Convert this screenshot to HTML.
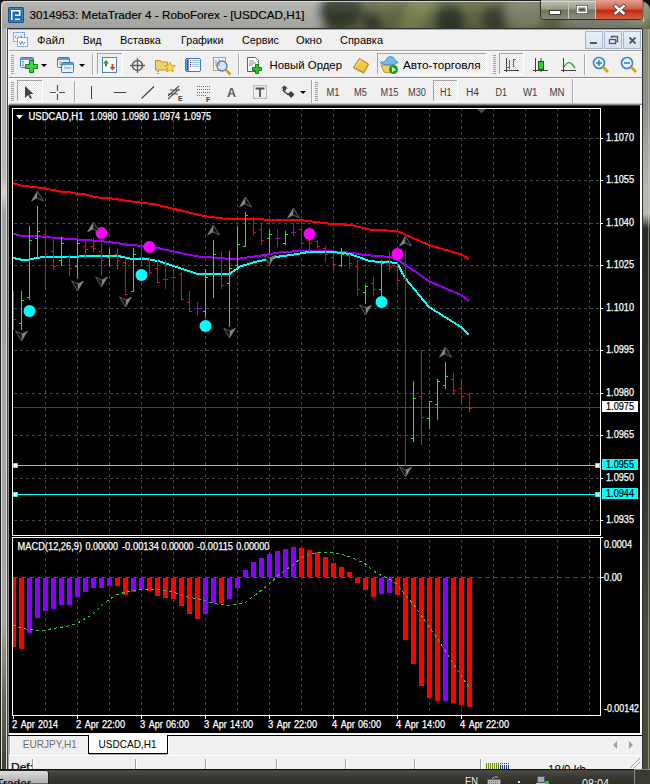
<!DOCTYPE html>
<html><head><meta charset="utf-8"><style>html,body{margin:0;padding:0;width:650px;height:784px;overflow:hidden;background:#000}</style></head>
<body><svg width="650" height="784" viewBox="0 0 650 784" font-family="'Liberation Sans', sans-serif" style="display:block">
<defs>
<linearGradient id="tb" x1="0" y1="0" x2="1" y2="0"><stop offset="0" stop-color="#b8b8b6"/><stop offset="0.3" stop-color="#b0b0ac"/><stop offset="0.46" stop-color="#a4a49c"/><stop offset="0.49" stop-color="#808070"/><stop offset="0.52" stop-color="#343a2c"/><stop offset="0.55" stop-color="#4c5238"/><stop offset="0.575" stop-color="#62683e"/><stop offset="0.6" stop-color="#40462e"/><stop offset="0.63" stop-color="#7a8050"/><stop offset="0.66" stop-color="#6a7040"/><stop offset="0.69" stop-color="#2e3424"/><stop offset="0.72" stop-color="#525a38"/><stop offset="0.75" stop-color="#3a4030"/><stop offset="0.78" stop-color="#6e7458"/><stop offset="0.83" stop-color="#8a8c78"/><stop offset="1" stop-color="#7a7c68"/></linearGradient>
<linearGradient id="tbv" x1="0" y1="0" x2="0" y2="1"><stop offset="0" stop-color="#fff" stop-opacity="0.18"/><stop offset="0.5" stop-color="#fff" stop-opacity="0.04"/><stop offset="1" stop-color="#000" stop-opacity="0.05"/></linearGradient>
<linearGradient id="lf" x1="0" y1="0" x2="0" y2="1"><stop offset="0" stop-color="#b4b4b2"/><stop offset="0.2" stop-color="#b8b8b6"/><stop offset="0.22" stop-color="#d4d4d2"/><stop offset="0.25" stop-color="#a0a0a0"/><stop offset="0.8" stop-color="#a8a8a8"/><stop offset="0.9" stop-color="#6a6a58"/><stop offset="1" stop-color="#3e4030"/></linearGradient>
<linearGradient id="rf" x1="0" y1="0" x2="0" y2="1"><stop offset="0" stop-color="#8a8c72"/><stop offset="0.1" stop-color="#8e8e86"/><stop offset="0.2" stop-color="#b4b4ac"/><stop offset="0.25" stop-color="#b8b8b0"/><stop offset="0.27" stop-color="#2a2c20"/><stop offset="0.6" stop-color="#34362a"/><stop offset="0.8" stop-color="#4a4a3a"/><stop offset="1" stop-color="#4a4a3a"/></linearGradient>
<linearGradient id="cls" x1="0" y1="0" x2="0" y2="1"><stop offset="0" stop-color="#e8a090"/><stop offset="0.45" stop-color="#d0604a"/><stop offset="0.55" stop-color="#c02a10"/><stop offset="1" stop-color="#d86040"/></linearGradient>
<linearGradient id="btn" x1="0" y1="0" x2="0" y2="1"><stop offset="0" stop-color="#e0e2d8" stop-opacity="0.75"/><stop offset="0.45" stop-color="#b0b2a0" stop-opacity="0.65"/><stop offset="0.55" stop-color="#70745e" stop-opacity="0.6"/><stop offset="1" stop-color="#9a9c88" stop-opacity="0.6"/></linearGradient>
<linearGradient id="task" x1="0" y1="0" x2="0" y2="1"><stop offset="0" stop-color="#1a1a1a"/><stop offset="0.12" stop-color="#4c4c48"/><stop offset="0.45" stop-color="#3c3c36"/><stop offset="1" stop-color="#2e2e26"/></linearGradient>
<linearGradient id="mdi" x1="0" y1="0" x2="0" y2="1"><stop offset="0" stop-color="#e8eff8"/><stop offset="1" stop-color="#d6e2f2"/></linearGradient>
<linearGradient id="tbtn" x1="0" y1="0" x2="0" y2="1"><stop offset="0" stop-color="#e0e0e0"/><stop offset="1" stop-color="#a8a8a8"/></linearGradient>
</defs>
<rect x="0" y="0" width="650" height="784" fill="#a8a8a4" />
<defs><filter id="bl" x="-10%" y="-50%" width="120%" height="200%"><feGaussianBlur stdDeviation="4"/></filter><clipPath id="tclip"><rect x="0" y="0" width="650" height="29"/></clipPath><clipPath id="rclip"><rect x="642" y="0" width="8" height="769"/></clipPath></defs>
<g clip-path="url(#tclip)"><rect x="0" y="0" width="650" height="29" fill="#586040"/><g filter="url(#bl)">
<rect x="-20" y="-10" width="342" height="50" fill="#a8a8a4"/>
<ellipse cx="340" cy="10" rx="22" ry="18" fill="#2c3224"/>
<polygon points="352,40 368,40 404,-10 388,-10" fill="#626840"/>
<ellipse cx="372" cy="22" rx="10" ry="10" fill="#30362a"/>
<polygon points="392,40 418,40 440,-10 414,-10" fill="#727a48"/>
<ellipse cx="450" cy="20" rx="14" ry="16" fill="#2a3024"/>
<ellipse cx="478" cy="5" rx="14" ry="10" fill="#5a6238"/>
<ellipse cx="495" cy="18" rx="14" ry="14" fill="#353b2c"/>
<ellipse cx="525" cy="14" rx="20" ry="18" fill="#747a60"/>
<ellipse cx="600" cy="22" rx="40" ry="12" fill="#7a7c70"/>
<ellipse cx="640" cy="10" rx="14" ry="20" fill="#8a8c70"/>
</g></g>
<rect x="0" y="0" width="650" height="29" fill="url(#tbv)" />
<rect x="0" y="29" width="8" height="740" fill="url(#lf)" />
<rect x="642" y="29" width="8" height="740" fill="url(#rf)" />
<rect x="0" y="0" width="650" height="1" fill="#202020" />
<path d="M0 0 H6 Q1 1 0 6Z" fill="#101010"/><path d="M1.5 8 Q1.5 1.5 7 1.5 H640" fill="none" stroke="#e8e8e8" stroke-width="1" opacity="0.8"/>
<rect x="0" y="0" width="1" height="784" fill="#1a1a1a" />
<rect x="1" y="6" width="1" height="763" fill="#e0e0e0" />
<rect x="6" y="28" width="1" height="741" fill="#d8d8d6" />
<rect x="7" y="28" width="1" height="741" fill="#454545" />
<rect x="8" y="28" width="634" height="1" fill="#e4e4e0" />
<rect x="8" y="29" width="1" height="76" fill="#fafafa" />
<rect x="7" y="28" width="635" height="1" fill="#303030" />
<rect x="642" y="29" width="1" height="740" fill="#303030" />
<rect x="648" y="29" width="1" height="740" fill="#d0d0c0" opacity="0.5"/>
<path d="M638 0 L650 0 L650 9 Q649 1.5 638 0Z" fill="#101010"/><path d="M643.5 22 V7 Q643.5 1.5 638 1.5" fill="none" stroke="#e0e0d8" stroke-width="1" opacity="0.7"/>
<rect x="8" y="7" width="16" height="16" rx="1.5" fill="#1a5288"/><rect x="9" y="8" width="14" height="14" rx="1" fill="#3a86c0"/><rect x="10" y="9" width="12" height="12" fill="#226aa6"/>
<path d="M11 10 h9.5 v6 h-5.5 v-1.6 h3.9 v-2.8 h-6.3 v8.4 h-1.6z" fill="#fff"/><rect x="15" y="18.5" width="5" height="1.6" fill="#e8f0f8"/>
<text x="29.5" y="18.5" font-size="11.5" fill="#000" text-anchor="start" font-weight="normal" textLength="275" lengthAdjust="spacingAndGlyphs" stroke="#000" stroke-width="0.15">3014953: MetaTrader 4 - RoboForex - [USDCAD,H1]</text>
<path d="M540.5 0 V16 Q540.5 19.5 544 19.5 H639.5 Q643 19.5 643 16 V0" fill="none" stroke="#303428" stroke-width="1"/>
<path d="M541 0 H568 V19 H544 Q541 19 541 16Z" fill="url(#btn)"/>
<path d="M569 0 H595 V19 H569Z" fill="url(#btn)"/>
<path d="M596 0 H642.5 V16 Q642.5 19 639.5 19 H596Z" fill="url(#cls)"/>
<rect x="568" y="0" width="1" height="19" fill="#e8e8e0" opacity="0.7"/>
<rect x="595" y="0" width="1" height="19" fill="#e8e8e0" opacity="0.7"/>
<rect x="549.5" y="10.5" width="11" height="4" fill="#fff" stroke="#404040" stroke-width="1"/>
<rect x="576.5" y="5.5" width="11" height="8" fill="none" stroke="#404040" stroke-width="1"/><rect x="577.5" y="6.5" width="9" height="6" fill="none" stroke="#fff" stroke-width="1.6"/><rect x="579.5" y="8.5" width="5" height="2" fill="#505050"/>
<path d="M614 5 L625 14.5 M625 5 L614 14.5" stroke="#404040" stroke-width="4"/><path d="M614.5 5.5 L624.5 14 M624.5 5.5 L614.5 14" stroke="#fff" stroke-width="2.4"/>
<rect x="9" y="30" width="633" height="739" fill="#f0f0f0" />
<rect x="13.5" y="32.5" width="11" height="9" fill="#f4f8ff" stroke="#3a7ae0" stroke-dasharray="1.2 0.8"/><path d="M15 37 l1.5 -2 M15 37 l1.5 2 M18 37 h4 l-1.5 -1.5 M22 37 l-1.5 1.5" stroke="#3a6ad0" stroke-width="0.7" fill="none"/>
<rect x="17.5" y="37.5" width="10" height="9" fill="#fff" stroke="#3a7ae0" stroke-dasharray="1.2 0.8"/><path d="M19 42 l1.5 2.5 l1.5 -3 l1.5 3 l1.5 -2.5" stroke="#3a6ad0" fill="none" stroke-width="0.8"/>
<text x="37" y="43.7" font-size="11" fill="#000" text-anchor="start" font-weight="normal" textLength="27.5" lengthAdjust="spacingAndGlyphs" >Файл</text>
<text x="83" y="43.7" font-size="11" fill="#000" text-anchor="start" font-weight="normal" textLength="18.5" lengthAdjust="spacingAndGlyphs" >Вид</text>
<text x="120" y="43.7" font-size="11" fill="#000" text-anchor="start" font-weight="normal" textLength="41" lengthAdjust="spacingAndGlyphs" >Вставка</text>
<text x="181" y="43.7" font-size="11" fill="#000" text-anchor="start" font-weight="normal" textLength="42.5" lengthAdjust="spacingAndGlyphs" >Графики</text>
<text x="242" y="43.7" font-size="11" fill="#000" text-anchor="start" font-weight="normal" textLength="37" lengthAdjust="spacingAndGlyphs" >Сервис</text>
<text x="296" y="43.7" font-size="11" fill="#000" text-anchor="start" font-weight="normal" textLength="26" lengthAdjust="spacingAndGlyphs" >Окно</text>
<text x="340" y="43.7" font-size="11" fill="#000" text-anchor="start" font-weight="normal" textLength="43" lengthAdjust="spacingAndGlyphs" >Справка</text>
<rect x="585.5" y="31.5" width="17" height="17" fill="url(#mdi)" stroke="#a4b4c8"/>
<rect x="604.5" y="31.5" width="17" height="17" fill="url(#mdi)" stroke="#a4b4c8"/>
<rect x="623.5" y="31.5" width="17" height="17" fill="url(#mdi)" stroke="#a4b4c8"/>
<rect x="590" y="42" width="7" height="2" fill="#505a64"/>
<rect x="609.5" y="39.5" width="6" height="4" fill="none" stroke="#505a64" stroke-width="1.3"/><path d="M611.5 38 V36.5 H617.5 V41.5 H616" fill="none" stroke="#505a64" stroke-width="1.3"/>
<path d="M629.5 37.5 L635.5 43.5 M635.5 37.5 L629.5 43.5" stroke="#505a64" stroke-width="1.8"/>
<rect x="9" y="50" width="633" height="1" fill="#a0a0a0" />
<rect x="9" y="51" width="633" height="1" fill="#ffffff" />
<rect x="9" y="52" width="633" height="25" fill="#f0f0f0" />
<rect x="9" y="77" width="633" height="1" fill="#8c8c8c" />
<rect x="9" y="78" width="633" height="1" fill="#ffffff" />
<rect x="9" y="79" width="633" height="24" fill="#f0f0f0" />
<rect x="11" y="55" width="3" height="1" fill="#a0a0a0" />
<rect x="11" y="57" width="3" height="1" fill="#a0a0a0" />
<rect x="11" y="59" width="3" height="1" fill="#a0a0a0" />
<rect x="11" y="61" width="3" height="1" fill="#a0a0a0" />
<rect x="11" y="63" width="3" height="1" fill="#a0a0a0" />
<rect x="11" y="65" width="3" height="1" fill="#a0a0a0" />
<rect x="11" y="67" width="3" height="1" fill="#a0a0a0" />
<rect x="11" y="69" width="3" height="1" fill="#a0a0a0" />
<rect x="11" y="71" width="3" height="1" fill="#a0a0a0" />
<rect x="11" y="73" width="3" height="1" fill="#a0a0a0" />
<rect x="11" y="82" width="3" height="1" fill="#a0a0a0" />
<rect x="11" y="84" width="3" height="1" fill="#a0a0a0" />
<rect x="11" y="86" width="3" height="1" fill="#a0a0a0" />
<rect x="11" y="88" width="3" height="1" fill="#a0a0a0" />
<rect x="11" y="90" width="3" height="1" fill="#a0a0a0" />
<rect x="11" y="92" width="3" height="1" fill="#a0a0a0" />
<rect x="11" y="94" width="3" height="1" fill="#a0a0a0" />
<rect x="11" y="96" width="3" height="1" fill="#a0a0a0" />
<rect x="11" y="98" width="3" height="1" fill="#a0a0a0" />
<rect x="11" y="100" width="3" height="1" fill="#a0a0a0" />
<rect x="493" y="55" width="3" height="1" fill="#a0a0a0" />
<rect x="493" y="57" width="3" height="1" fill="#a0a0a0" />
<rect x="493" y="59" width="3" height="1" fill="#a0a0a0" />
<rect x="493" y="61" width="3" height="1" fill="#a0a0a0" />
<rect x="493" y="63" width="3" height="1" fill="#a0a0a0" />
<rect x="493" y="65" width="3" height="1" fill="#a0a0a0" />
<rect x="493" y="67" width="3" height="1" fill="#a0a0a0" />
<rect x="493" y="69" width="3" height="1" fill="#a0a0a0" />
<rect x="493" y="71" width="3" height="1" fill="#a0a0a0" />
<rect x="493" y="73" width="3" height="1" fill="#a0a0a0" />
<rect x="315" y="82" width="3" height="1" fill="#a0a0a0" />
<rect x="315" y="84" width="3" height="1" fill="#a0a0a0" />
<rect x="315" y="86" width="3" height="1" fill="#a0a0a0" />
<rect x="315" y="88" width="3" height="1" fill="#a0a0a0" />
<rect x="315" y="90" width="3" height="1" fill="#a0a0a0" />
<rect x="315" y="92" width="3" height="1" fill="#a0a0a0" />
<rect x="315" y="94" width="3" height="1" fill="#a0a0a0" />
<rect x="315" y="96" width="3" height="1" fill="#a0a0a0" />
<rect x="315" y="98" width="3" height="1" fill="#a0a0a0" />
<rect x="315" y="100" width="3" height="1" fill="#a0a0a0" />
<rect x="92" y="54" width="1" height="21" fill="#a8a8a8" />
<rect x="93" y="54" width="1" height="21" fill="#ffffff" />
<rect x="238" y="54" width="1" height="21" fill="#a8a8a8" />
<rect x="239" y="54" width="1" height="21" fill="#ffffff" />
<rect x="584" y="54" width="1" height="21" fill="#a8a8a8" />
<rect x="585" y="54" width="1" height="21" fill="#ffffff" />
<rect x="74" y="81" width="1" height="21" fill="#a8a8a8" />
<rect x="75" y="81" width="1" height="21" fill="#ffffff" />
<rect x="311" y="80" width="1" height="23" fill="#a8a8a8" />
<rect x="312" y="80" width="1" height="23" fill="#ffffff" />
<rect x="572" y="79" width="1" height="25" fill="#a8a8a8" />
<rect x="573" y="79" width="1" height="25" fill="#ffffff" />
<defs><pattern id="chk" x="0" y="0" width="2" height="2" patternUnits="userSpaceOnUse"><rect width="2" height="2" fill="#fbfbfb"/><rect width="1" height="1" fill="#e6e6e6"/><rect x="1" y="1" width="1" height="1" fill="#e6e6e6"/></pattern></defs>
<rect x="97" y="53" width="26" height="22" fill="url(#chk)"/>
<rect x="97" y="53" width="26" height="1" fill="#a4a4a4" />
<rect x="97" y="53" width="1" height="22" fill="#a4a4a4" />
<rect x="97" y="74" width="26" height="1" fill="#ffffff" />
<rect x="122" y="53" width="1" height="22" fill="#ffffff" />
<rect x="499" y="53" width="25" height="22" fill="url(#chk)"/>
<rect x="499" y="53" width="25" height="1" fill="#a4a4a4" />
<rect x="499" y="53" width="1" height="22" fill="#a4a4a4" />
<rect x="499" y="74" width="25" height="1" fill="#ffffff" />
<rect x="523" y="53" width="1" height="22" fill="#ffffff" />
<rect x="17" y="80" width="26" height="22" fill="url(#chk)"/>
<rect x="17" y="80" width="26" height="1" fill="#a4a4a4" />
<rect x="17" y="80" width="1" height="22" fill="#a4a4a4" />
<rect x="17" y="101" width="26" height="1" fill="#ffffff" />
<rect x="42" y="80" width="1" height="22" fill="#ffffff" />
<rect x="433" y="80" width="25" height="22" fill="url(#chk)"/>
<rect x="433" y="80" width="25" height="1" fill="#a4a4a4" />
<rect x="433" y="80" width="1" height="22" fill="#a4a4a4" />
<rect x="433" y="101" width="25" height="1" fill="#ffffff" />
<rect x="457" y="80" width="1" height="22" fill="#ffffff" />
<rect x="377" y="53" width="110" height="22" fill="url(#chk)"/>
<rect x="377" y="53" width="110" height="1" fill="#a4a4a4" />
<rect x="377" y="53" width="1" height="22" fill="#a4a4a4" />
<rect x="377" y="74" width="110" height="1" fill="#ffffff" />
<rect x="486" y="53" width="1" height="22" fill="#ffffff" />
<rect x="20.5" y="57.5" width="13" height="10" rx="1" fill="#e8f0fa" stroke="#3a7ac8"/><rect x="21" y="58" width="12" height="2" fill="#5a9ae0"/>
<path d="M23 61 v5 M22 62 l1 -1 l1 1 M22 65 l1 1 l1 -1" stroke="#7090b0" stroke-width="0.8" fill="none"/>
<path d="M29.5 60.5 h4 v4 h4 v4 h-4 v4 h-4 v-4 h-4 v-4 h4z" fill="#40d040" stroke="#108010"/>
<path d="M41 64 h6 l-3 3z" fill="#000"/>
<rect x="57.5" y="57.5" width="12" height="10" rx="1" fill="#e8f0fa" stroke="#3a7ac8"/><rect x="61.5" y="62.5" width="12" height="10" rx="1" fill="#e8f0fa" stroke="#3a7ac8"/><rect x="62" y="63" width="11" height="2" fill="#5a9ae0"/><rect x="58" y="58" width="11" height="2" fill="#5a9ae0"/>
<path d="M60 61 v4 M64 68 h7 M60 65 h5" stroke="#7090b0" stroke-width="0.8" fill="none"/>
<path d="M79 64 h6 l-3 3z" fill="#000"/>
<rect x="102.5" y="57.5" width="14" height="15" fill="#fff" stroke="#4a86c8"/>
<path d="M106 60 l-3 3.5 h2 v3 h2 v-3 h2z" fill="#20a020"/><path d="M112.5 70.5 l3 -3.5 h-2 v-3 h-2 v3 h-2z" fill="#e04020"/>
<circle cx="137.5" cy="65.5" r="5" fill="none" stroke="#606060" stroke-width="1.6"/><path d="M137.5 58 v15 M130 65.5 h15" stroke="#606060" stroke-width="1.4"/>
<path d="M155.5 60.5 h5 l1 1.5 h6 v8 h-12z" fill="#f0d070" stroke="#c09030"/><path d="M170 62 l1.6 3.4 3.7 .4 -2.8 2.5 .8 3.7 -3.3 -1.9 -3.3 1.9 .8 -3.7 -2.8 -2.5 3.7 -.4z" fill="#f8d840" stroke="#c89a20" stroke-width="0.8"/>
<path d="M158 71 v3" stroke="#404040" stroke-dasharray="1 1"/>
<rect x="185.5" y="58.5" width="15" height="13" rx="1.5" fill="#fff" stroke="#3a7ac8" stroke-width="1"/><rect x="186" y="59" width="3" height="12" fill="#5a9ae0"/><rect x="187" y="60" width="1" height="10" fill="#2a5a90"/><path d="M191.5 60.5 h8 M191.5 62.5 h8 M191.5 64.5 h8 M191.5 66.5 h8" stroke="#a8c4ec" stroke-width="1"/><rect x="190" y="60" width="1" height="1" fill="#e02020"/><rect x="190" y="62" width="1" height="1" fill="#202020"/><rect x="190" y="64" width="1" height="1" fill="#202020"/><rect x="190" y="66" width="1" height="1" fill="#e02020"/>
<rect x="213.5" y="57.5" width="12" height="13" fill="#f4f4f4" stroke="#b0a080"/><circle cx="222" cy="66" r="5" fill="#cfe4f8" stroke="#5080b0" stroke-width="1.3"/><path d="M225.5 69.5 l5 5" stroke="#d0a020" stroke-width="2.5"/><path d="M216 60 v6 M219 59 v7" stroke="#708090" stroke-width="0.8"/>
<path d="M247.5 57.5 h8 l3 3 v11 h-11z" fill="#fff" stroke="#606060"/><path d="M249 61 h5 M249 63 h7 M249 65 h4" stroke="#909090"/>
<path d="M255.5 64.5 h3 v3 h3 v3 h-3 v3 h-3 v-3 h-3 v-3 h3z" fill="#30c030" stroke="#108010"/>
<text x="269.5" y="69" font-size="11" fill="#000" text-anchor="start" font-weight="normal" textLength="72.5" lengthAdjust="spacingAndGlyphs" >Новый Ордер</text>
<path d="M353.5 67.5 L359.5 58.5 L368.5 64 L363.5 72.5 Z" fill="#f0c848" stroke="#a87820"/><path d="M354 68 L363.5 73 L368.5 64.5" fill="none" stroke="#c89030" stroke-width="1.2"/><path d="M356 66 L361 59.5" stroke="#fff0a0" stroke-width="1"/>
<path d="M381 65 l14 0 l-3 7 q-4 2 -8 0z" fill="#f0d060" stroke="#b09030"/><path d="M380 62.5 q3 -1 5 -1 q2 -5 5.5 -5 q3.5 0 5 4 q2 0.5 2.5 2 q-3 2.5 -9 2.5 q-6 0 -9 -2.5z" fill="#78b8e8" stroke="#4a88b8" stroke-width="0.8"/><circle cx="393.5" cy="69.5" r="4.5" fill="#22a022"/><path d="M392 67 v5 l4 -2.5z" fill="#fff"/>
<text x="403" y="69" font-size="11" fill="#000" text-anchor="start" font-weight="normal" textLength="77.5" lengthAdjust="spacingAndGlyphs" >Авто-торговля</text>
<path d="M506.5 58 v14 M504 70.5 h15" stroke="#404040" stroke-width="1"/>
<path d="M509.5 60 v9 M507 67.5 h2 M513.5 59 v8 M513.5 59.5 h2" stroke="#20a020" stroke-width="1.2"/>
<path d="M535.5 58 v14 M533 70.5 h15" stroke="#404040" stroke-width="1"/>
<rect x="538.5" y="61.5" width="5" height="8" fill="#30d030" stroke="#106010"/><path d="M541 58 v3 M541 69 v3" stroke="#404040"/>
<path d="M563.5 58 v14 M561 70.5 h15" stroke="#404040" stroke-width="1"/>
<path d="M564 67 q4 -7 8 -3 l3 4" stroke="#20a020" stroke-width="1.3" fill="none"/>
<circle cx="599" cy="63" r="5.5" fill="#e8f4ff" stroke="#3a80c8" stroke-width="1.6"/><path d="M603 67 l5 5" stroke="#d8a020" stroke-width="3"/>
<path d="M596 63 h6" stroke="#3a80c8" stroke-width="1.6"/>
<path d="M599 60 v6" stroke="#3a80c8" stroke-width="1.6"/>
<circle cx="627" cy="63" r="5.5" fill="#e8f4ff" stroke="#3a80c8" stroke-width="1.6"/><path d="M631 67 l5 5" stroke="#d8a020" stroke-width="3"/>
<path d="M624 63 h6" stroke="#3a80c8" stroke-width="1.6"/>
<path d="M25 86 v12 l3 -3 l2.5 4 l1.5 -1 l-2.5 -4 h4z" fill="#404040"/>
<path d="M57.5 85 v6 M57.5 94 v6 M50 92.5 h6 M59 92.5 h6" stroke="#505050" stroke-width="1.2"/>
<rect x="91" y="86" width="1" height="13" fill="#404040" />
<rect x="114" y="92" width="12" height="1" fill="#404040" />
<path d="M141.5 98.5 L154 86.5" stroke="#404040" stroke-width="1.1"/>
<path d="M168 96 l11 -10 M168 99 l11 -10 M170 90 h10 M168 94 h10" stroke="#505050" stroke-width="1.1"/><text x="178" y="101" font-size="7" font-weight="bold" fill="#404040">E</text>
<path d="M197 86.5 h13 M197 89.5 h13 M197 92.5 h13 M197 95.5 h9" stroke="#707070" stroke-dasharray="1 1"/><text x="206" y="101.5" font-size="7" font-weight="bold" fill="#404040">F</text>
<text x="227" y="97" font-size="12" fill="#606060" text-anchor="start" font-weight="bold" textLength="9" lengthAdjust="spacingAndGlyphs" >A</text>
<rect x="253.5" y="85.5" width="13" height="13" fill="none" stroke="#808080" stroke-dasharray="1 1"/><path d="M255.5 88.5 h9 M260 88.5 v8.5" stroke="#505050" stroke-width="1.8"/>
<path d="M281 88.5 l3.5 -3 l3.5 3 l-2 0 l0 2 l-3 0 l0 -2z" fill="#404040"/><path d="M282.5 90 l6 5" stroke="#404040" stroke-width="1.6"/><path d="M287.5 94 l3.5 -3 l3.5 3.5 l-3.5 3.5z" fill="#404040"/>
<path d="M300 91 h6 l-3 3z" fill="#000"/>
<text x="326.5" y="96" font-size="10" fill="#3c3c3c" text-anchor="start" font-weight="normal" textLength="13" lengthAdjust="spacingAndGlyphs" >M1</text>
<text x="354" y="96" font-size="10" fill="#3c3c3c" text-anchor="start" font-weight="normal" textLength="13" lengthAdjust="spacingAndGlyphs" >M5</text>
<text x="380.5" y="96" font-size="10" fill="#3c3c3c" text-anchor="start" font-weight="normal" textLength="18" lengthAdjust="spacingAndGlyphs" >M15</text>
<text x="408" y="96" font-size="10" fill="#3c3c3c" text-anchor="start" font-weight="normal" textLength="18" lengthAdjust="spacingAndGlyphs" >M30</text>
<text x="440" y="96" font-size="10" fill="#3c3c3c" text-anchor="start" font-weight="normal" textLength="11.5" lengthAdjust="spacingAndGlyphs" >H1</text>
<text x="466" y="96" font-size="10" fill="#3c3c3c" text-anchor="start" font-weight="normal" textLength="13" lengthAdjust="spacingAndGlyphs" >H4</text>
<text x="495.5" y="96" font-size="10" fill="#3c3c3c" text-anchor="start" font-weight="normal" textLength="11.5" lengthAdjust="spacingAndGlyphs" >D1</text>
<text x="523" y="96" font-size="10" fill="#3c3c3c" text-anchor="start" font-weight="normal" textLength="14.5" lengthAdjust="spacingAndGlyphs" >W1</text>
<text x="549.5" y="96" font-size="10" fill="#3c3c3c" text-anchor="start" font-weight="normal" textLength="15" lengthAdjust="spacingAndGlyphs" >MN</text>
<rect x="9" y="103" width="633" height="1" fill="#c8c8c8" />
<rect x="9" y="104" width="633" height="1" fill="#888888" />
<rect x="9" y="105" width="633" height="630" fill="#000" />
<rect x="8" y="105" width="1" height="630" fill="#909090" />
<rect x="640" y="105" width="2" height="630" fill="#ffffff" />
<rect x="9" y="733" width="633" height="2" fill="#ffffff" />
<rect x="9" y="105" width="631" height="1" fill="#404040" />
<g shape-rendering="crispEdges">
<line x1="14" y1="138.5" x2="600" y2="138.5" stroke="#3c4650" stroke-dasharray="3 3"/>
<line x1="14" y1="180.5" x2="600" y2="180.5" stroke="#3c4650" stroke-dasharray="3 3"/>
<line x1="14" y1="223.5" x2="600" y2="223.5" stroke="#3c4650" stroke-dasharray="3 3"/>
<line x1="14" y1="265.5" x2="600" y2="265.5" stroke="#3c4650" stroke-dasharray="3 3"/>
<line x1="14" y1="308.5" x2="600" y2="308.5" stroke="#3c4650" stroke-dasharray="3 3"/>
<line x1="14" y1="350.5" x2="600" y2="350.5" stroke="#3c4650" stroke-dasharray="3 3"/>
<line x1="14" y1="393.5" x2="600" y2="393.5" stroke="#3c4650" stroke-dasharray="3 3"/>
<line x1="14" y1="435.5" x2="600" y2="435.5" stroke="#3c4650" stroke-dasharray="3 3"/>
<line x1="14" y1="478.5" x2="600" y2="478.5" stroke="#3c4650" stroke-dasharray="3 3"/>
<line x1="14" y1="520.5" x2="600" y2="520.5" stroke="#3c4650" stroke-dasharray="3 3"/>
<line x1="45.5" y1="108" x2="45.5" y2="535" stroke="#3c4650" stroke-dasharray="3 3"/>
<line x1="45.5" y1="540" x2="45.5" y2="715" stroke="#3c4650" stroke-dasharray="3 3"/>
<line x1="77.5" y1="108" x2="77.5" y2="535" stroke="#3c4650" stroke-dasharray="3 3"/>
<line x1="77.5" y1="540" x2="77.5" y2="715" stroke="#3c4650" stroke-dasharray="3 3"/>
<line x1="109.5" y1="108" x2="109.5" y2="535" stroke="#3c4650" stroke-dasharray="3 3"/>
<line x1="109.5" y1="540" x2="109.5" y2="715" stroke="#3c4650" stroke-dasharray="3 3"/>
<line x1="141.5" y1="108" x2="141.5" y2="535" stroke="#3c4650" stroke-dasharray="3 3"/>
<line x1="141.5" y1="540" x2="141.5" y2="715" stroke="#3c4650" stroke-dasharray="3 3"/>
<line x1="173.5" y1="108" x2="173.5" y2="535" stroke="#3c4650" stroke-dasharray="3 3"/>
<line x1="173.5" y1="540" x2="173.5" y2="715" stroke="#3c4650" stroke-dasharray="3 3"/>
<line x1="205.5" y1="108" x2="205.5" y2="535" stroke="#3c4650" stroke-dasharray="3 3"/>
<line x1="205.5" y1="540" x2="205.5" y2="715" stroke="#3c4650" stroke-dasharray="3 3"/>
<line x1="237.5" y1="108" x2="237.5" y2="535" stroke="#3c4650" stroke-dasharray="3 3"/>
<line x1="237.5" y1="540" x2="237.5" y2="715" stroke="#3c4650" stroke-dasharray="3 3"/>
<line x1="269.5" y1="108" x2="269.5" y2="535" stroke="#3c4650" stroke-dasharray="3 3"/>
<line x1="269.5" y1="540" x2="269.5" y2="715" stroke="#3c4650" stroke-dasharray="3 3"/>
<line x1="301.5" y1="108" x2="301.5" y2="535" stroke="#3c4650" stroke-dasharray="3 3"/>
<line x1="301.5" y1="540" x2="301.5" y2="715" stroke="#3c4650" stroke-dasharray="3 3"/>
<line x1="333.5" y1="108" x2="333.5" y2="535" stroke="#3c4650" stroke-dasharray="3 3"/>
<line x1="333.5" y1="540" x2="333.5" y2="715" stroke="#3c4650" stroke-dasharray="3 3"/>
<line x1="365.5" y1="108" x2="365.5" y2="535" stroke="#3c4650" stroke-dasharray="3 3"/>
<line x1="365.5" y1="540" x2="365.5" y2="715" stroke="#3c4650" stroke-dasharray="3 3"/>
<line x1="397.5" y1="108" x2="397.5" y2="535" stroke="#3c4650" stroke-dasharray="3 3"/>
<line x1="397.5" y1="540" x2="397.5" y2="715" stroke="#3c4650" stroke-dasharray="3 3"/>
<line x1="429.5" y1="108" x2="429.5" y2="535" stroke="#3c4650" stroke-dasharray="3 3"/>
<line x1="429.5" y1="540" x2="429.5" y2="715" stroke="#3c4650" stroke-dasharray="3 3"/>
<line x1="461.5" y1="108" x2="461.5" y2="535" stroke="#3c4650" stroke-dasharray="3 3"/>
<line x1="461.5" y1="540" x2="461.5" y2="715" stroke="#3c4650" stroke-dasharray="3 3"/>
<line x1="493.5" y1="108" x2="493.5" y2="535" stroke="#3c4650" stroke-dasharray="3 3"/>
<line x1="493.5" y1="540" x2="493.5" y2="715" stroke="#3c4650" stroke-dasharray="3 3"/>
<line x1="525.5" y1="108" x2="525.5" y2="535" stroke="#3c4650" stroke-dasharray="3 3"/>
<line x1="525.5" y1="540" x2="525.5" y2="715" stroke="#3c4650" stroke-dasharray="3 3"/>
<line x1="557.5" y1="108" x2="557.5" y2="535" stroke="#3c4650" stroke-dasharray="3 3"/>
<line x1="557.5" y1="540" x2="557.5" y2="715" stroke="#3c4650" stroke-dasharray="3 3"/>
<line x1="589.5" y1="108" x2="589.5" y2="535" stroke="#3c4650" stroke-dasharray="3 3"/>
<line x1="589.5" y1="540" x2="589.5" y2="715" stroke="#3c4650" stroke-dasharray="3 3"/>
<path d="M12.5 108.5 H600.5 V535.5 H12.5Z" fill="none" stroke="#fff"/>
<path d="M12.5 537.5 H600.5 V715.5 H12.5Z" fill="none" stroke="#fff"/>
<rect x="601" y="138" width="2" height="1" fill="#fff" />
<rect x="601" y="180" width="2" height="1" fill="#fff" />
<rect x="601" y="223" width="2" height="1" fill="#fff" />
<rect x="601" y="265" width="2" height="1" fill="#fff" />
<rect x="601" y="308" width="2" height="1" fill="#fff" />
<rect x="601" y="350" width="2" height="1" fill="#fff" />
<rect x="601" y="393" width="2" height="1" fill="#fff" />
<rect x="601" y="435" width="2" height="1" fill="#fff" />
<rect x="601" y="478" width="2" height="1" fill="#fff" />
<rect x="601" y="520" width="2" height="1" fill="#fff" />
</g>
<text x="606" y="141.2" font-size="10" fill="#fff" text-anchor="start" font-weight="normal" textLength="28" lengthAdjust="spacingAndGlyphs" stroke="#fff" stroke-width="0.25">1.1070</text>
<text x="606" y="183.2" font-size="10" fill="#fff" text-anchor="start" font-weight="normal" textLength="28" lengthAdjust="spacingAndGlyphs" stroke="#fff" stroke-width="0.25">1.1055</text>
<text x="606" y="226.2" font-size="10" fill="#fff" text-anchor="start" font-weight="normal" textLength="28" lengthAdjust="spacingAndGlyphs" stroke="#fff" stroke-width="0.25">1.1040</text>
<text x="606" y="268.2" font-size="10" fill="#fff" text-anchor="start" font-weight="normal" textLength="28" lengthAdjust="spacingAndGlyphs" stroke="#fff" stroke-width="0.25">1.1025</text>
<text x="606" y="311.2" font-size="10" fill="#fff" text-anchor="start" font-weight="normal" textLength="28" lengthAdjust="spacingAndGlyphs" stroke="#fff" stroke-width="0.25">1.1010</text>
<text x="606" y="353.2" font-size="10" fill="#fff" text-anchor="start" font-weight="normal" textLength="28" lengthAdjust="spacingAndGlyphs" stroke="#fff" stroke-width="0.25">1.0995</text>
<text x="606" y="396.2" font-size="10" fill="#fff" text-anchor="start" font-weight="normal" textLength="28" lengthAdjust="spacingAndGlyphs" stroke="#fff" stroke-width="0.25">1.0980</text>
<text x="606" y="438.2" font-size="10" fill="#fff" text-anchor="start" font-weight="normal" textLength="28" lengthAdjust="spacingAndGlyphs" stroke="#fff" stroke-width="0.25">1.0965</text>
<text x="606" y="481.2" font-size="10" fill="#fff" text-anchor="start" font-weight="normal" textLength="28" lengthAdjust="spacingAndGlyphs" stroke="#fff" stroke-width="0.25">1.0950</text>
<text x="606" y="523.2" font-size="10" fill="#fff" text-anchor="start" font-weight="normal" textLength="28" lengthAdjust="spacingAndGlyphs" stroke="#fff" stroke-width="0.25">1.0935</text>
<rect x="13" y="407" width="587" height="1" fill="#3e4852" />
<rect x="602" y="401" width="36" height="11" fill="#fff" />
<text x="606" y="410" font-size="10" fill="#000" text-anchor="start" font-weight="normal" textLength="28" lengthAdjust="spacingAndGlyphs" stroke="#000" stroke-width="0.2">1.0975</text>
<rect x="13" y="465" width="587" height="1" fill="#00ffff" />
<rect x="13" y="463" width="5" height="5" fill="#00ffff" />
<rect x="14" y="464" width="3" height="3" fill="#fff" />
<rect x="595" y="463" width="5" height="5" fill="#00ffff" />
<rect x="596" y="464" width="3" height="3" fill="#fff" />
<rect x="602" y="459" width="36" height="11" fill="#00ffff" />
<text x="606" y="468.2" font-size="10" fill="#000" text-anchor="start" font-weight="normal" textLength="28" lengthAdjust="spacingAndGlyphs" stroke="#000" stroke-width="0.2">1.0955</text>
<rect x="13" y="494" width="587" height="1" fill="#00ffff" />
<rect x="13" y="492" width="5" height="5" fill="#00ffff" />
<rect x="14" y="493" width="3" height="3" fill="#fff" />
<rect x="595" y="492" width="5" height="5" fill="#00ffff" />
<rect x="596" y="493" width="3" height="3" fill="#fff" />
<rect x="602" y="488" width="36" height="11" fill="#00ffff" />
<text x="606" y="497.2" font-size="10" fill="#000" text-anchor="start" font-weight="normal" textLength="28" lengthAdjust="spacingAndGlyphs" stroke="#000" stroke-width="0.2">1.0944</text>
<path d="M477 109 H486 L481.5 113.5Z" fill="#46505a"/>
<path d="M16 115 h7 l-3.5 4z" fill="#fff"/>
<text x="28.5" y="120" font-size="10" fill="#fff" text-anchor="start" font-weight="normal" textLength="55" lengthAdjust="spacingAndGlyphs" stroke="#fff" stroke-width="0.25">USDCAD,H1</text>
<text x="90" y="120" font-size="10" fill="#fff" text-anchor="start" font-weight="normal" textLength="27.5" lengthAdjust="spacingAndGlyphs" stroke="#fff" stroke-width="0.25">1.0980</text>
<text x="121.5" y="120" font-size="10" fill="#fff" text-anchor="start" font-weight="normal" textLength="27.5" lengthAdjust="spacingAndGlyphs" stroke="#fff" stroke-width="0.25">1.0980</text>
<text x="152.5" y="120" font-size="10" fill="#fff" text-anchor="start" font-weight="normal" textLength="27.5" lengthAdjust="spacingAndGlyphs" stroke="#fff" stroke-width="0.25">1.0974</text>
<text x="183.5" y="120" font-size="10" fill="#fff" text-anchor="start" font-weight="normal" textLength="27.5" lengthAdjust="spacingAndGlyphs" stroke="#fff" stroke-width="0.25">1.0975</text>
<defs><clipPath id="cm"><rect x="13" y="109" width="587" height="426"/></clipPath><clipPath id="cd"><rect x="13" y="539" width="587" height="176"/></clipPath></defs>
<g clip-path="url(#cm)" shape-rendering="crispEdges">
<polyline points="13,183 21,185.5 29,186.5 37,187.3 45,188.5 53,190 61,191.6 69,192.2 77,193.8 85,194.4 93,196.5 101,197.8 109,198 130,201.3 155,204.4 205,216.3 225,218.7 255,218.7 270,220 300,220 318,222.3 330,223.8 350,224.8 370,229.6 397,231 405,234.5 429,245 461,254.4 469,259" fill="none" stroke="#ff0000" stroke-width="2" stroke-linejoin="round"/>
<polyline points="13,233.5 21,235.8 37,236.2 45,236.8 53,237.8 69,238.8 85,240 101,241.2 109,242 130,245 150,246.5 197,256.4 225,258.5 240,258.5 262,255.4 280,252.3 295,251.3 330,251.3 345,252 365,255 390,257 397,260 405,264.3 429,281.2 461,295 469,301" fill="none" stroke="#9a00f0" stroke-width="2" stroke-linejoin="round"/>
<polyline points="13,258 21,259.6 29,259.6 37,257.8 45,257 101,256.2 120,256.4 130,258.5 150,259.5 160,261.5 197,273.8 230,273.8 240,266.6 255,262 280,256.4 295,254.4 310,251.7 330,251.7 350,254 370,261.2 397,262.8 405,278 429,307 461,327 469,334.7" fill="none" stroke="#00ffff" stroke-width="2" stroke-linejoin="round"/>
<rect x="13" y="291" width="1" height="39" fill="#ff0000" />
<rect x="14" y="319" width="2" height="1" fill="#ff0000" />
<rect x="21" y="291" width="1" height="39" fill="#00ff00" />
<rect x="19" y="323" width="2" height="1" fill="#00ff00" />
<rect x="22" y="300" width="2" height="1" fill="#00ff00" />
<rect x="29" y="226" width="1" height="74" fill="#00ff00" />
<rect x="27" y="297" width="2" height="1" fill="#00ff00" />
<rect x="30" y="240" width="2" height="1" fill="#00ff00" />
<rect x="37" y="206" width="1" height="52" fill="#00ff00" />
<rect x="35" y="238" width="2" height="1" fill="#00ff00" />
<rect x="38" y="231" width="2" height="1" fill="#00ff00" />
<rect x="45" y="228" width="1" height="62" fill="#ff0000" />
<rect x="43" y="234" width="2" height="1" fill="#ff0000" />
<rect x="46" y="254" width="2" height="1" fill="#ff0000" />
<rect x="53" y="239" width="1" height="31" fill="#ff0000" />
<rect x="51" y="251" width="2" height="1" fill="#ff0000" />
<rect x="54" y="266" width="2" height="1" fill="#ff0000" />
<rect x="61" y="237" width="1" height="29" fill="#00ff00" />
<rect x="59" y="260" width="2" height="1" fill="#00ff00" />
<rect x="62" y="243" width="2" height="1" fill="#00ff00" />
<rect x="69" y="254" width="1" height="22" fill="#ff0000" />
<rect x="67" y="257" width="2" height="1" fill="#ff0000" />
<rect x="70" y="268" width="2" height="1" fill="#ff0000" />
<rect x="77" y="240" width="1" height="39" fill="#00ff00" />
<rect x="75" y="266" width="2" height="1" fill="#00ff00" />
<rect x="78" y="243" width="2" height="1" fill="#00ff00" />
<rect x="85" y="240" width="1" height="18" fill="#ff0000" />
<rect x="83" y="246" width="2" height="1" fill="#ff0000" />
<rect x="86" y="249" width="2" height="1" fill="#ff0000" />
<rect x="93" y="238" width="1" height="14" fill="#ff0000" />
<rect x="91" y="246" width="2" height="1" fill="#ff0000" />
<rect x="94" y="248" width="2" height="1" fill="#ff0000" />
<rect x="101" y="242" width="1" height="34" fill="#ff0000" />
<rect x="99" y="251" width="2" height="1" fill="#ff0000" />
<rect x="102" y="260" width="2" height="1" fill="#ff0000" />
<rect x="109" y="248" width="1" height="19" fill="#00ff00" />
<rect x="107" y="257" width="2" height="1" fill="#00ff00" />
<rect x="110" y="256" width="2" height="1" fill="#00ff00" />
<rect x="117" y="248" width="1" height="22" fill="#ff0000" />
<rect x="115" y="254" width="2" height="1" fill="#ff0000" />
<rect x="118" y="260" width="2" height="1" fill="#ff0000" />
<rect x="125" y="260" width="1" height="35" fill="#ff0000" />
<rect x="123" y="262" width="2" height="1" fill="#ff0000" />
<rect x="126" y="294" width="2" height="1" fill="#ff0000" />
<rect x="133" y="248" width="1" height="44" fill="#00ff00" />
<rect x="131" y="291" width="2" height="1" fill="#00ff00" />
<rect x="134" y="254" width="2" height="1" fill="#00ff00" />
<rect x="141" y="244" width="1" height="23" fill="#9a00f0" />
<rect x="139" y="257" width="2" height="1" fill="#9a00f0" />
<rect x="142" y="257" width="2" height="1" fill="#9a00f0" />
<rect x="149" y="257" width="1" height="18" fill="#ff0000" />
<rect x="147" y="260" width="2" height="1" fill="#ff0000" />
<rect x="150" y="272" width="2" height="1" fill="#ff0000" />
<rect x="157" y="260" width="1" height="23" fill="#ff0000" />
<rect x="155" y="268" width="2" height="1" fill="#ff0000" />
<rect x="158" y="282" width="2" height="1" fill="#ff0000" />
<rect x="165" y="260" width="1" height="29" fill="#9a00f0" />
<rect x="163" y="279" width="2" height="1" fill="#9a00f0" />
<rect x="166" y="279" width="2" height="1" fill="#9a00f0" />
<rect x="173" y="269" width="1" height="23" fill="#9a00f0" />
<rect x="171" y="277" width="2" height="1" fill="#9a00f0" />
<rect x="174" y="277" width="2" height="1" fill="#9a00f0" />
<rect x="181" y="272" width="1" height="28" fill="#ff0000" />
<rect x="179" y="274" width="2" height="1" fill="#ff0000" />
<rect x="182" y="299" width="2" height="1" fill="#ff0000" />
<rect x="189" y="291" width="1" height="21" fill="#ff0000" />
<rect x="187" y="302" width="2" height="1" fill="#ff0000" />
<rect x="190" y="311" width="2" height="1" fill="#ff0000" />
<rect x="197" y="302" width="1" height="14" fill="#9a00f0" />
<rect x="195" y="308" width="2" height="1" fill="#9a00f0" />
<rect x="198" y="308" width="2" height="1" fill="#9a00f0" />
<rect x="205" y="269" width="1" height="49" fill="#00ff00" />
<rect x="203" y="311" width="2" height="1" fill="#00ff00" />
<rect x="206" y="277" width="2" height="1" fill="#00ff00" />
<rect x="213" y="240" width="1" height="58" fill="#00ff00" />
<rect x="211" y="274" width="2" height="1" fill="#00ff00" />
<rect x="214" y="254" width="2" height="1" fill="#00ff00" />
<rect x="221" y="251" width="1" height="38" fill="#ff0000" />
<rect x="219" y="257" width="2" height="1" fill="#ff0000" />
<rect x="222" y="285" width="2" height="1" fill="#ff0000" />
<rect x="229" y="251" width="1" height="76" fill="#00ff00" />
<rect x="227" y="283" width="2" height="1" fill="#00ff00" />
<rect x="230" y="268" width="2" height="1" fill="#00ff00" />
<rect x="237" y="226" width="1" height="41" fill="#00ff00" />
<rect x="235" y="265" width="2" height="1" fill="#00ff00" />
<rect x="238" y="244" width="2" height="1" fill="#00ff00" />
<rect x="245" y="212" width="1" height="35" fill="#00ff00" />
<rect x="243" y="246" width="2" height="1" fill="#00ff00" />
<rect x="246" y="215" width="2" height="1" fill="#00ff00" />
<rect x="253" y="217" width="1" height="18" fill="#ff0000" />
<rect x="251" y="218" width="2" height="1" fill="#ff0000" />
<rect x="254" y="232" width="2" height="1" fill="#ff0000" />
<rect x="261" y="223" width="1" height="22" fill="#ff0000" />
<rect x="259" y="229" width="2" height="1" fill="#ff0000" />
<rect x="262" y="240" width="2" height="1" fill="#ff0000" />
<rect x="269" y="229" width="1" height="24" fill="#00ff00" />
<rect x="267" y="238" width="2" height="1" fill="#00ff00" />
<rect x="270" y="234" width="2" height="1" fill="#00ff00" />
<rect x="277" y="229" width="1" height="18" fill="#9a00f0" />
<rect x="275" y="238" width="2" height="1" fill="#9a00f0" />
<rect x="278" y="238" width="2" height="1" fill="#9a00f0" />
<rect x="285" y="231" width="1" height="14" fill="#00ff00" />
<rect x="283" y="243" width="2" height="1" fill="#00ff00" />
<rect x="286" y="234" width="2" height="1" fill="#00ff00" />
<rect x="293" y="223" width="1" height="13" fill="#9a00f0" />
<rect x="291" y="232" width="2" height="1" fill="#9a00f0" />
<rect x="294" y="232" width="2" height="1" fill="#9a00f0" />
<rect x="301" y="226" width="1" height="19" fill="#ff0000" />
<rect x="299" y="229" width="2" height="1" fill="#ff0000" />
<rect x="302" y="243" width="2" height="1" fill="#ff0000" />
<rect x="309" y="234" width="1" height="18" fill="#ff0000" />
<rect x="307" y="240" width="2" height="1" fill="#ff0000" />
<rect x="310" y="243" width="2" height="1" fill="#ff0000" />
<rect x="317" y="240" width="1" height="9" fill="#ff0000" />
<rect x="315" y="241" width="2" height="1" fill="#ff0000" />
<rect x="318" y="246" width="2" height="1" fill="#ff0000" />
<rect x="325" y="246" width="1" height="16" fill="#ff0000" />
<rect x="323" y="248" width="2" height="1" fill="#ff0000" />
<rect x="326" y="254" width="2" height="1" fill="#ff0000" />
<rect x="333" y="254" width="1" height="16" fill="#ff0000" />
<rect x="331" y="257" width="2" height="1" fill="#ff0000" />
<rect x="334" y="264" width="2" height="1" fill="#ff0000" />
<rect x="341" y="248" width="1" height="19" fill="#00ff00" />
<rect x="339" y="265" width="2" height="1" fill="#00ff00" />
<rect x="342" y="254" width="2" height="1" fill="#00ff00" />
<rect x="349" y="254" width="1" height="15" fill="#ff0000" />
<rect x="347" y="255" width="2" height="1" fill="#ff0000" />
<rect x="350" y="263" width="2" height="1" fill="#ff0000" />
<rect x="357" y="260" width="1" height="36" fill="#ff0000" />
<rect x="355" y="266" width="2" height="1" fill="#ff0000" />
<rect x="358" y="289" width="2" height="1" fill="#ff0000" />
<rect x="365" y="285" width="1" height="19" fill="#00ff00" />
<rect x="363" y="292" width="2" height="1" fill="#00ff00" />
<rect x="366" y="286" width="2" height="1" fill="#00ff00" />
<rect x="373" y="277" width="1" height="19" fill="#ff0000" />
<rect x="371" y="283" width="2" height="1" fill="#ff0000" />
<rect x="374" y="289" width="2" height="1" fill="#ff0000" />
<rect x="381" y="260" width="1" height="36" fill="#00ff00" />
<rect x="379" y="289" width="2" height="1" fill="#00ff00" />
<rect x="382" y="263" width="2" height="1" fill="#00ff00" />
<rect x="389" y="251" width="1" height="21" fill="#ff0000" />
<rect x="387" y="260" width="2" height="1" fill="#ff0000" />
<rect x="390" y="266" width="2" height="1" fill="#ff0000" />
<rect x="397" y="263" width="1" height="24" fill="#ff0000" />
<rect x="395" y="266" width="2" height="1" fill="#ff0000" />
<rect x="398" y="280" width="2" height="1" fill="#ff0000" />
<rect x="405" y="251" width="1" height="215" fill="#ff0000" />
<rect x="403" y="278" width="2" height="1" fill="#ff0000" />
<rect x="406" y="435" width="2" height="1" fill="#ff0000" />
<rect x="413" y="381" width="1" height="61" fill="#00ff00" />
<rect x="411" y="438" width="2" height="1" fill="#00ff00" />
<rect x="414" y="398" width="2" height="1" fill="#00ff00" />
<rect x="421" y="350" width="1" height="95" fill="#ff0000" />
<rect x="419" y="396" width="2" height="1" fill="#ff0000" />
<rect x="422" y="417" width="2" height="1" fill="#ff0000" />
<rect x="429" y="401" width="1" height="28" fill="#00ff00" />
<rect x="427" y="418" width="2" height="1" fill="#00ff00" />
<rect x="430" y="401" width="2" height="1" fill="#00ff00" />
<rect x="437" y="379" width="1" height="41" fill="#00ff00" />
<rect x="435" y="404" width="2" height="1" fill="#00ff00" />
<rect x="438" y="381" width="2" height="1" fill="#00ff00" />
<rect x="445" y="362" width="1" height="27" fill="#00ff00" />
<rect x="443" y="385" width="2" height="1" fill="#00ff00" />
<rect x="446" y="376" width="2" height="1" fill="#00ff00" />
<rect x="453" y="373" width="1" height="22" fill="#ff0000" />
<rect x="451" y="379" width="2" height="1" fill="#ff0000" />
<rect x="454" y="390" width="2" height="1" fill="#ff0000" />
<rect x="461" y="379" width="1" height="24" fill="#ff0000" />
<rect x="459" y="388" width="2" height="1" fill="#ff0000" />
<rect x="462" y="396" width="2" height="1" fill="#ff0000" />
<rect x="469" y="393" width="1" height="19" fill="#ff0000" />
<rect x="467" y="394" width="2" height="1" fill="#ff0000" />
<rect x="470" y="408" width="2" height="1" fill="#ff0000" />
</g>
<g clip-path="url(#cm)">
<circle cx="101.5" cy="233" r="6" fill="#ff00ff"/>
<circle cx="149.5" cy="247" r="6" fill="#ff00ff"/>
<circle cx="309.5" cy="234" r="6" fill="#ff00ff"/>
<circle cx="397.5" cy="254" r="6" fill="#ff00ff"/>
<circle cx="29.5" cy="311" r="6" fill="#00ffff"/>
<circle cx="141.5" cy="275" r="6" fill="#00ffff"/>
<circle cx="205.5" cy="326" r="6" fill="#00ffff"/>
<circle cx="381.5" cy="302" r="6" fill="#00ffff"/>
<path d="M37.5 191 L31.5 201 L37.0 198 L43.5 201Z" fill="#161616" stroke="#6c6c6c" stroke-width="0.8"/><path d="M37.5 191 L31.5 201 L37.0 198Z" fill="#848484"/>
<path d="M93.5 222 L87.5 232 L93.0 229 L99.5 232Z" fill="#161616" stroke="#6c6c6c" stroke-width="0.8"/><path d="M93.5 222 L87.5 232 L93.0 229Z" fill="#848484"/>
<path d="M213.5 225 L207.5 235 L213.0 232 L219.5 235Z" fill="#161616" stroke="#6c6c6c" stroke-width="0.8"/><path d="M213.5 225 L207.5 235 L213.0 232Z" fill="#848484"/>
<path d="M245.5 197 L239.5 207 L245.0 204 L251.5 207Z" fill="#161616" stroke="#6c6c6c" stroke-width="0.8"/><path d="M245.5 197 L239.5 207 L245.0 204Z" fill="#848484"/>
<path d="M293.5 208 L287.5 218 L293.0 215 L299.5 218Z" fill="#161616" stroke="#6c6c6c" stroke-width="0.8"/><path d="M293.5 208 L287.5 218 L293.0 215Z" fill="#848484"/>
<path d="M405.5 236 L399.5 246 L405.0 243 L411.5 246Z" fill="#161616" stroke="#6c6c6c" stroke-width="0.8"/><path d="M405.5 236 L399.5 246 L405.0 243Z" fill="#848484"/>
<path d="M445.5 347 L439.5 357 L445.0 354 L451.5 357Z" fill="#161616" stroke="#6c6c6c" stroke-width="0.8"/><path d="M445.5 347 L439.5 357 L445.0 354Z" fill="#848484"/>
<path d="M21.5 341 L15.5 331 L22.0 334 L27.5 331Z" fill="#161616" stroke="#6c6c6c" stroke-width="0.8"/><path d="M21.5 341 L27.5 331 L22.0 334Z" fill="#848484"/>
<path d="M77.5 291 L71.5 281 L78.0 284 L83.5 281Z" fill="#161616" stroke="#6c6c6c" stroke-width="0.8"/><path d="M77.5 291 L83.5 281 L78.0 284Z" fill="#848484"/>
<path d="M101.5 287 L95.5 277 L102.0 280 L107.5 277Z" fill="#161616" stroke="#6c6c6c" stroke-width="0.8"/><path d="M101.5 287 L107.5 277 L102.0 280Z" fill="#848484"/>
<path d="M125.5 307 L119.5 297 L126.0 300 L131.5 297Z" fill="#161616" stroke="#6c6c6c" stroke-width="0.8"/><path d="M125.5 307 L131.5 297 L126.0 300Z" fill="#848484"/>
<path d="M229.5 338 L223.5 328 L230.0 331 L235.5 328Z" fill="#161616" stroke="#6c6c6c" stroke-width="0.8"/><path d="M229.5 338 L235.5 328 L230.0 331Z" fill="#848484"/>
<path d="M269.5 265 L263.5 255 L270.0 258 L275.5 255Z" fill="#161616" stroke="#6c6c6c" stroke-width="0.8"/><path d="M269.5 265 L275.5 255 L270.0 258Z" fill="#848484"/>
<path d="M365.5 315 L359.5 305 L366.0 308 L371.5 305Z" fill="#161616" stroke="#6c6c6c" stroke-width="0.8"/><path d="M365.5 315 L371.5 305 L366.0 308Z" fill="#848484"/>
<path d="M405.5 477 L399.5 467 L406.0 470 L411.5 467Z" fill="#161616" stroke="#6c6c6c" stroke-width="0.8"/><path d="M405.5 477 L411.5 467 L406.0 470Z" fill="#848484"/>
</g>
<g clip-path="url(#cd)" shape-rendering="crispEdges">
<line x1="13" y1="577.5" x2="600" y2="577.5" stroke="#483d8b" stroke-dasharray="5 3"/>
<rect x="11" y="578" width="5" height="69" fill="#ff0000" />
<rect x="19" y="578" width="5" height="71" fill="#ff0000" />
<rect x="27" y="578" width="5" height="55" fill="#8800ff" />
<rect x="35" y="578" width="5" height="40" fill="#8800ff" />
<rect x="43" y="578" width="5" height="33" fill="#8800ff" />
<rect x="51" y="578" width="5" height="31" fill="#8800ff" />
<rect x="59" y="578" width="5" height="27" fill="#8800ff" />
<rect x="67" y="578" width="5" height="27" fill="#8800ff" />
<rect x="75" y="578" width="5" height="19" fill="#8800ff" />
<rect x="83" y="578" width="5" height="14" fill="#8800ff" />
<rect x="91" y="578" width="5" height="10" fill="#8800ff" />
<rect x="99" y="578" width="5" height="10" fill="#8800ff" />
<rect x="107" y="578" width="5" height="8" fill="#8800ff" />
<rect x="115" y="578" width="5" height="8" fill="#ff0000" />
<rect x="123" y="578" width="5" height="17" fill="#ff0000" />
<rect x="131" y="578" width="5" height="14" fill="#8800ff" />
<rect x="139" y="578" width="5" height="11" fill="#8800ff" />
<rect x="147" y="578" width="5" height="13" fill="#ff0000" />
<rect x="155" y="578" width="5" height="18" fill="#ff0000" />
<rect x="163" y="578" width="5" height="20" fill="#ff0000" />
<rect x="171" y="578" width="5" height="21" fill="#ff0000" />
<rect x="179" y="578" width="5" height="28" fill="#ff0000" />
<rect x="187" y="578" width="5" height="36" fill="#ff0000" />
<rect x="195" y="578" width="5" height="41" fill="#ff0000" />
<rect x="203" y="578" width="5" height="36" fill="#8800ff" />
<rect x="211" y="578" width="5" height="25" fill="#8800ff" />
<rect x="219" y="578" width="5" height="25" fill="#ff0000" />
<rect x="227" y="578" width="5" height="21" fill="#8800ff" />
<rect x="235" y="578" width="5" height="10" fill="#8800ff" />
<rect x="243" y="570" width="5" height="7" fill="#8800ff" />
<rect x="251" y="562" width="5" height="15" fill="#8800ff" />
<rect x="259" y="558" width="5" height="19" fill="#8800ff" />
<rect x="267" y="554" width="5" height="23" fill="#8800ff" />
<rect x="275" y="551" width="5" height="26" fill="#8800ff" />
<rect x="283" y="549" width="5" height="28" fill="#8800ff" />
<rect x="291" y="547" width="5" height="30" fill="#8800ff" />
<rect x="299" y="548" width="5" height="29" fill="#ff0000" />
<rect x="307" y="550" width="5" height="27" fill="#ff0000" />
<rect x="315" y="552" width="5" height="25" fill="#ff0000" />
<rect x="323" y="557" width="5" height="20" fill="#ff0000" />
<rect x="331" y="563" width="5" height="14" fill="#ff0000" />
<rect x="339" y="567" width="5" height="10" fill="#ff0000" />
<rect x="347" y="572" width="5" height="5" fill="#ff0000" />
<rect x="355" y="578" width="5" height="5" fill="#ff0000" />
<rect x="363" y="578" width="5" height="12" fill="#ff0000" />
<rect x="371" y="578" width="5" height="19" fill="#ff0000" />
<rect x="379" y="578" width="5" height="16" fill="#8800ff" />
<rect x="387" y="578" width="5" height="15" fill="#8800ff" />
<rect x="395" y="578" width="5" height="17" fill="#ff0000" />
<rect x="403" y="578" width="5" height="62" fill="#ff0000" />
<rect x="411" y="578" width="5" height="86" fill="#ff0000" />
<rect x="419" y="578" width="5" height="108" fill="#ff0000" />
<rect x="427" y="578" width="5" height="120" fill="#ff0000" />
<rect x="435" y="578" width="5" height="123" fill="#ff0000" />
<rect x="443" y="578" width="5" height="123" fill="#8800ff" />
<rect x="451" y="578" width="5" height="125" fill="#ff0000" />
<rect x="459" y="578" width="5" height="127" fill="#ff0000" />
<rect x="467" y="578" width="5" height="129" fill="#ff0000" />
</g>
<g clip-path="url(#cd)">
<polyline points="13,625.0 21,628.0 29,629.6 37,630.4 45,630.4 53,628.4 61,627.3 69,625.8 77,623.5 85,618.8 93,614.2 101,605.8 109,599.6 117,594.6 125,592.3 133,590.8 141,589.2 149,589.0 157,589.2 165,590.5 173,592.0 181,594.6 189,597.4 197,598.5 205,600.5 213,603.5 221,604.5 229,605.5 237,604.5 245,602.7 253,596.5 261,590.7 269,584.2 277,576.5 285,570.4 293,565.0 301,558.0 309,554.5 317,552.4 325,552.2 333,552.7 341,554.2 349,556.5 357,560.0 365,563.5 373,570.4 381,575.3 389,578.7 397,584.3 405,594.9 413,603.5 421,615.0 429,626.4 437,637.9 445,650.3 453,663.7 461,675.2 469,687.6" fill="none" stroke="#30d030" stroke-width="1" stroke-dasharray="3 3" shape-rendering="crispEdges"/>
</g>
<text x="17.6" y="550" font-size="10" fill="#fff" text-anchor="start" font-weight="normal" textLength="64.4" lengthAdjust="spacingAndGlyphs" stroke="#fff" stroke-width="0.25">MACD(12,26,9)</text>
<text x="85.6" y="550" font-size="10" fill="#fff" text-anchor="start" font-weight="normal" textLength="32.4" lengthAdjust="spacingAndGlyphs" stroke="#fff" stroke-width="0.25">0.00000</text>
<text x="122" y="550" font-size="10" fill="#fff" text-anchor="start" font-weight="normal" textLength="37" lengthAdjust="spacingAndGlyphs" stroke="#fff" stroke-width="0.25">-0.00134</text>
<text x="161.5" y="550" font-size="10" fill="#fff" text-anchor="start" font-weight="normal" textLength="32" lengthAdjust="spacingAndGlyphs" stroke="#fff" stroke-width="0.25">0.00000</text>
<text x="197" y="550" font-size="10" fill="#fff" text-anchor="start" font-weight="normal" textLength="36" lengthAdjust="spacingAndGlyphs" stroke="#fff" stroke-width="0.25">-0.00115</text>
<text x="236.3" y="550" font-size="10" fill="#fff" text-anchor="start" font-weight="normal" textLength="33" lengthAdjust="spacingAndGlyphs" stroke="#fff" stroke-width="0.25">0.00000</text>
<rect x="601" y="537" width="2" height="1" fill="#fff" />
<rect x="601" y="577" width="3" height="1" fill="#fff" />
<text x="604" y="547.5" font-size="10" fill="#fff" text-anchor="start" font-weight="normal" textLength="28" lengthAdjust="spacingAndGlyphs" stroke="#fff" stroke-width="0.25">0.0004</text>
<text x="604" y="580.5" font-size="10" fill="#fff" text-anchor="start" font-weight="normal" textLength="18" lengthAdjust="spacingAndGlyphs" stroke="#fff" stroke-width="0.25">0.00</text>
<text x="604" y="711.5" font-size="10" fill="#fff" text-anchor="start" font-weight="normal" textLength="35" lengthAdjust="spacingAndGlyphs" stroke="#fff" stroke-width="0.25">-0.00142</text>
<rect x="13" y="716" width="1" height="3" fill="#fff" />
<text x="12" y="728" font-size="10" fill="#fff" text-anchor="start" font-weight="normal" textLength="5.2" lengthAdjust="spacingAndGlyphs" stroke="#fff" stroke-width="0.25">2</text>
<text x="20.8" y="728" font-size="10" fill="#fff" text-anchor="start" font-weight="normal" textLength="14" lengthAdjust="spacingAndGlyphs" stroke="#fff" stroke-width="0.25">Apr</text>
<text x="38" y="728" font-size="10" fill="#fff" text-anchor="start" font-weight="normal" textLength="20" lengthAdjust="spacingAndGlyphs" stroke="#fff" stroke-width="0.25">2014</text>
<rect x="77" y="716" width="1" height="3" fill="#fff" />
<text x="76" y="728" font-size="10" fill="#fff" text-anchor="start" font-weight="normal" textLength="5.2" lengthAdjust="spacingAndGlyphs" stroke="#fff" stroke-width="0.25">2</text>
<text x="84.8" y="728" font-size="10" fill="#fff" text-anchor="start" font-weight="normal" textLength="14" lengthAdjust="spacingAndGlyphs" stroke="#fff" stroke-width="0.25">Apr</text>
<text x="102" y="728" font-size="10" fill="#fff" text-anchor="start" font-weight="normal" textLength="23" lengthAdjust="spacingAndGlyphs" stroke="#fff" stroke-width="0.25">22:00</text>
<rect x="141" y="716" width="1" height="3" fill="#fff" />
<text x="140" y="728" font-size="10" fill="#fff" text-anchor="start" font-weight="normal" textLength="5.2" lengthAdjust="spacingAndGlyphs" stroke="#fff" stroke-width="0.25">3</text>
<text x="148.8" y="728" font-size="10" fill="#fff" text-anchor="start" font-weight="normal" textLength="14" lengthAdjust="spacingAndGlyphs" stroke="#fff" stroke-width="0.25">Apr</text>
<text x="166" y="728" font-size="10" fill="#fff" text-anchor="start" font-weight="normal" textLength="23" lengthAdjust="spacingAndGlyphs" stroke="#fff" stroke-width="0.25">06:00</text>
<rect x="205" y="716" width="1" height="3" fill="#fff" />
<text x="204" y="728" font-size="10" fill="#fff" text-anchor="start" font-weight="normal" textLength="5.2" lengthAdjust="spacingAndGlyphs" stroke="#fff" stroke-width="0.25">3</text>
<text x="212.8" y="728" font-size="10" fill="#fff" text-anchor="start" font-weight="normal" textLength="14" lengthAdjust="spacingAndGlyphs" stroke="#fff" stroke-width="0.25">Apr</text>
<text x="230" y="728" font-size="10" fill="#fff" text-anchor="start" font-weight="normal" textLength="23" lengthAdjust="spacingAndGlyphs" stroke="#fff" stroke-width="0.25">14:00</text>
<rect x="269" y="716" width="1" height="3" fill="#fff" />
<text x="268" y="728" font-size="10" fill="#fff" text-anchor="start" font-weight="normal" textLength="5.2" lengthAdjust="spacingAndGlyphs" stroke="#fff" stroke-width="0.25">3</text>
<text x="276.8" y="728" font-size="10" fill="#fff" text-anchor="start" font-weight="normal" textLength="14" lengthAdjust="spacingAndGlyphs" stroke="#fff" stroke-width="0.25">Apr</text>
<text x="294" y="728" font-size="10" fill="#fff" text-anchor="start" font-weight="normal" textLength="23" lengthAdjust="spacingAndGlyphs" stroke="#fff" stroke-width="0.25">22:00</text>
<rect x="333" y="716" width="1" height="3" fill="#fff" />
<text x="332" y="728" font-size="10" fill="#fff" text-anchor="start" font-weight="normal" textLength="5.2" lengthAdjust="spacingAndGlyphs" stroke="#fff" stroke-width="0.25">4</text>
<text x="340.8" y="728" font-size="10" fill="#fff" text-anchor="start" font-weight="normal" textLength="14" lengthAdjust="spacingAndGlyphs" stroke="#fff" stroke-width="0.25">Apr</text>
<text x="358" y="728" font-size="10" fill="#fff" text-anchor="start" font-weight="normal" textLength="23" lengthAdjust="spacingAndGlyphs" stroke="#fff" stroke-width="0.25">06:00</text>
<rect x="397" y="716" width="1" height="3" fill="#fff" />
<text x="396" y="728" font-size="10" fill="#fff" text-anchor="start" font-weight="normal" textLength="5.2" lengthAdjust="spacingAndGlyphs" stroke="#fff" stroke-width="0.25">4</text>
<text x="404.8" y="728" font-size="10" fill="#fff" text-anchor="start" font-weight="normal" textLength="14" lengthAdjust="spacingAndGlyphs" stroke="#fff" stroke-width="0.25">Apr</text>
<text x="422" y="728" font-size="10" fill="#fff" text-anchor="start" font-weight="normal" textLength="23" lengthAdjust="spacingAndGlyphs" stroke="#fff" stroke-width="0.25">14:00</text>
<rect x="461" y="716" width="1" height="3" fill="#fff" />
<text x="460" y="728" font-size="10" fill="#fff" text-anchor="start" font-weight="normal" textLength="5.2" lengthAdjust="spacingAndGlyphs" stroke="#fff" stroke-width="0.25">4</text>
<text x="468.8" y="728" font-size="10" fill="#fff" text-anchor="start" font-weight="normal" textLength="14" lengthAdjust="spacingAndGlyphs" stroke="#fff" stroke-width="0.25">Apr</text>
<text x="486" y="728" font-size="10" fill="#fff" text-anchor="start" font-weight="normal" textLength="23" lengthAdjust="spacingAndGlyphs" stroke="#fff" stroke-width="0.25">22:00</text>
<rect x="9" y="735" width="633" height="20" fill="#f0f0f0" />
<rect x="8" y="735" width="634" height="1" fill="#000" />
<rect x="9" y="736" width="1" height="18" fill="#a0a0a0" />
<rect x="10" y="736" width="1" height="18" fill="#ffffff" />
<text x="22.8" y="747.5" font-size="11" fill="#6d6d6d" text-anchor="start" font-weight="normal" textLength="54" lengthAdjust="spacingAndGlyphs" >EURJPY,H1</text>
<rect x="89" y="735" width="78" height="18" fill="#fff" />
<rect x="88" y="735" width="1" height="19" fill="#000" />
<rect x="167" y="735" width="1" height="19" fill="#000" />
<rect x="88" y="753" width="80" height="1" fill="#000" />
<rect x="89" y="754" width="79" height="1" fill="#b0b0b0" />
<rect x="168" y="736" width="1" height="17" fill="#ffffff" />
<text x="98.5" y="747.7" font-size="11" fill="#000" text-anchor="start" font-weight="normal" textLength="58" lengthAdjust="spacingAndGlyphs" >USDCAD,H1</text>
<path d="M617 749 l-4 -4 l4 -4z M629 741 l4 4 l-4 4z" fill="#a0a0a0"/>
<rect x="9" y="755" width="633" height="1" fill="#ffffff" />
<rect x="9" y="756" width="633" height="13" fill="#f0f0f0" />
<rect x="32" y="759" width="1" height="10" fill="#a0a0a0" />
<rect x="33" y="759" width="1" height="10" fill="#fff" />
<rect x="135" y="759" width="1" height="10" fill="#a0a0a0" />
<rect x="136" y="759" width="1" height="10" fill="#fff" />
<rect x="205" y="759" width="1" height="10" fill="#a0a0a0" />
<rect x="206" y="759" width="1" height="10" fill="#fff" />
<rect x="276" y="759" width="1" height="10" fill="#a0a0a0" />
<rect x="277" y="759" width="1" height="10" fill="#fff" />
<rect x="345" y="759" width="1" height="10" fill="#a0a0a0" />
<rect x="346" y="759" width="1" height="10" fill="#fff" />
<rect x="414" y="759" width="1" height="10" fill="#a0a0a0" />
<rect x="415" y="759" width="1" height="10" fill="#fff" />
<rect x="480" y="759" width="1" height="10" fill="#a0a0a0" />
<rect x="481" y="759" width="1" height="10" fill="#fff" />
<text x="11" y="770.5" font-size="11.5" fill="#000" text-anchor="start" font-weight="normal" textLength="22" lengthAdjust="spacingAndGlyphs" stroke="#000" stroke-width="0.2">Def:</text>
<g>
<rect x="486" y="762" width="1" height="7" fill="#6a8a10" />
<rect x="488" y="762" width="1" height="7" fill="#6a8a10" />
<rect x="490" y="762" width="1" height="7" fill="#6a8a10" />
<rect x="492" y="762" width="1" height="7" fill="#6a8a10" />
<rect x="494" y="762" width="1" height="7" fill="#6a8a10" />
<rect x="496" y="762" width="1" height="7" fill="#6a8a10" />
<rect x="498" y="762" width="1" height="7" fill="#6a8a10" />
<rect x="500" y="762" width="1" height="7" fill="#204080" />
<rect x="502" y="762" width="1" height="7" fill="#204080" />
<rect x="504" y="762" width="1" height="7" fill="#204080" />
<rect x="506" y="762" width="1" height="7" fill="#204080" />
<rect x="508" y="762" width="1" height="7" fill="#204080" />
<rect x="486" y="762" width="24" height="1" fill="#f0f0f0" />
<rect x="500" y="764" width="10" height="1" fill="#f0f0f0" />
</g>
<text x="548" y="774" font-size="12" fill="#000" text-anchor="start" font-weight="normal" textLength="38" lengthAdjust="spacingAndGlyphs" >18/0 kb</text>
<path d="M630 768 l10 -10 M634 768 l6 -6" stroke="#a0a0a0"/>
<rect x="0" y="769" width="650" height="15" fill="url(#task)" />
<rect x="0" y="769" width="650" height="1" fill="#101010" />
<path d="M-2 770.5 H46 Q48.5 770.5 48.5 773 V784 H-2z" fill="url(#tbtn)" stroke="#202020"/>
<text x="-4" y="788" font-size="12" fill="#000" text-anchor="start" font-weight="normal" >Trader</text>
<text x="465" y="785" font-size="11" fill="#e8e8e8" text-anchor="start" font-weight="normal" textLength="13" lengthAdjust="spacingAndGlyphs" >EN</text>
<path d="M487.5 779.5 h13 v6 h-13z" fill="#b8b8b8" stroke="#606060"/><path d="M489 781.5 h10 M489 783.5 h10" stroke="#707070" stroke-dasharray="1 1"/><path d="M492 779 q2 -3 6 -2" stroke="#b0b0b0" fill="none"/>
<rect x="518" y="781" width="2" height="2" fill="#e0e0e0" />
<rect x="537.5" y="776.5" width="7" height="6" fill="#a0a8b0" stroke="#505860"/><rect x="536" y="783" width="10" height="2" fill="#c0c0c0"/><rect x="545" y="781" width="4" height="4" fill="#30c030"/>
<text x="582" y="788" font-size="12" fill="#f0f0f0" text-anchor="start" font-weight="normal" textLength="27" lengthAdjust="spacingAndGlyphs" >08:04</text>
<rect x="634.5" y="769.5" width="16" height="15" fill="#3a3a34" stroke="#8a8a80"/>
</svg></body></html>
